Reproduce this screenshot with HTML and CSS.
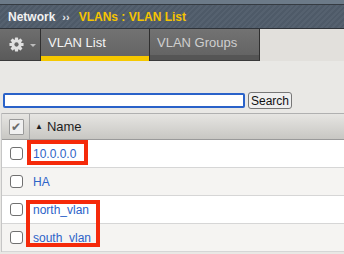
FILE: index.html
```html
<!DOCTYPE html>
<html lang="en">
<head>
  <meta charset="UTF-8">
  <title>VLAN List</title>
  <link rel="stylesheet" href="styles.css">
</head>
<body>
  <div class="topline"></div>
  <div class="crumbs">
    <span class="crumb">Network</span>
    <span class="sep">&rsaquo;&rsaquo;</span>
    <span class="here">VLANs : VLAN List</span>
  </div>

  <div class="tabs">
    <div class="menu">
      <svg width="15" height="15" viewBox="0 0 14 14">
        <g fill="#e0e0e0">
          <circle cx="7" cy="7" r="4.8"/>
          <rect x="5.5" y="0.4" width="3" height="13.2" rx="0.6"/>
          <rect x="5.5" y="0.4" width="3" height="13.2" rx="0.6" transform="rotate(45 7 7)"/>
          <rect x="5.5" y="0.4" width="3" height="13.2" rx="0.6" transform="rotate(90 7 7)"/>
          <rect x="5.5" y="0.4" width="3" height="13.2" rx="0.6" transform="rotate(135 7 7)"/>
        </g>
        <circle cx="7" cy="7" r="2" fill="#666"/>
      </svg>
      <span class="caret"></span>
    </div>
    <div class="tab active">VLAN List</div>
    <div class="tab">VLAN Groups</div>
  </div>

  <div class="search">
    <input class="search-box" type="text" value="">
    <button class="search-btn">Search</button>
  </div>

  <div class="list">
    <div class="row head">
      <div class="cell check"><span class="box checked">&#10004;</span></div>
      <div class="cell name"><span class="arrow">&#9650;</span> Name</div>
    </div>
    <div class="row">
      <div class="cell check"><span class="box"></span></div>
      <div class="cell name"><a href="#">10.0.0.0</a></div>
    </div>
    <div class="row alt">
      <div class="cell check"><span class="box"></span></div>
      <div class="cell name"><a href="#">HA</a></div>
    </div>
    <div class="row">
      <div class="cell check"><span class="box"></span></div>
      <div class="cell name"><a href="#">north_vlan</a></div>
    </div>
    <div class="row alt">
      <div class="cell check"><span class="box"></span></div>
      <div class="cell name"><a href="#">south_vlan</a></div>
    </div>

    <div class="mark mark-one"></div>
    <div class="mark mark-two"></div>
  </div>
</body>
</html>
```

FILE: styles.css
```css
body {
  margin: 0;
  background: #e9e8e5;
  font-family: "Liberation Sans", Arial, sans-serif;
  font-size: 12px;
  width: 344px;
  height: 254px;
  overflow: hidden;
}
.topline {
  height: 4px;
  background: #6c7a88;
}
.crumbs {
  height: 23px;
  border-top: 1px solid #353b42;
  border-bottom: 1px solid #2e3238;
  background: repeating-linear-gradient(135deg, #4e5a68 0, #4e5a68 2px, #55616f 2px, #55616f 4px);
  display: flex;
  align-items: center;
  padding-left: 8px;
  font-weight: bold;
}
.crumb {
  color: #f2f2f2;
}
.sep {
  color: #e8e8e8;
  margin: 0 9px 0 7px;
  font-size: 11px;
}
.here {
  color: #f5c400;
}
.tabs {
  display: flex;
  height: 32px;
  background: #e2e0dc;
}
.menu {
  box-sizing: border-box;
  width: 41px;
  border-right: 1px solid #2f2f2f;
  border-bottom: 1px solid #3a3a3a;
  background: linear-gradient(#6e6e6e, #5a5a5a);
  display: flex;
  align-items: center;
  padding-left: 9px;
}
.caret {
  width: 0;
  height: 0;
  border-left: 3px solid transparent;
  border-right: 3px solid transparent;
  border-top: 3px solid #bbb;
  margin-left: 6px;
  margin-top: 1px;
}
.tab {
  box-sizing: border-box;
  width: 110px;
  border-right: 1px solid #2f2f2f;
  border-bottom: 1px solid #3a3a3a;
  background: linear-gradient(#727272, #626262);
  color: #cfcfcf;
  font-size: 13px;
  padding: 6px 0 0 7px;
  box-shadow: inset 0 -5px 0 #555;
}
.tab.active {
  width: 109px;
  color: #f4f4f4;
  border-bottom: none;
  box-shadow: inset 0 -5px 0 #f5c800;
}
.search {
  display: flex;
  align-items: center;
  margin: 31px 0 0 3px;
  height: 17px;
}
.search-box {
  box-sizing: border-box;
  width: 242px;
  height: 15px;
  margin: 0;
  border: 2px solid #2a62c9;
  border-radius: 2px;
  background: #fff;
  padding: 0 2px;
}
.search-btn {
  box-sizing: border-box;
  height: 17px;
  margin: 0 0 0 3px;
  padding: 0 2px;
  font-family: "Liberation Sans", Arial, sans-serif;
  font-size: 12px;
  color: #111;
  background: #efefef;
  border: 1px solid #777;
  border-radius: 3px;
}
.list {
  position: relative;
  margin-top: 4px;
  margin-left: 1px;
  border-left: 1px solid #c6c6c6;
}
.row {
  display: flex;
  height: 27px;
  border-bottom: 1px solid #d6d6d6;
  background: #fff;
}
.row.alt {
  background: #f5f4f2;
}
.row.head {
  height: 25px;
  border-top: 1px solid #b0b0b0;
  border-bottom: 1px solid #9a9a9a;
  background: linear-gradient(#e6e5e2, #c8c7c3);
}
.cell {
  display: flex;
  align-items: center;
}
.check {
  width: 27px;
  justify-content: center;
}
.head .check {
  border-right: 1px solid #a8a8a8;
}
.box {
  box-sizing: border-box;
  width: 13px;
  height: 13px;
  border: 1px solid #707070;
  border-radius: 3px;
  background: #fff;
  margin-left: 1px;
}
.box.checked {
  width: 15px;
  height: 16px;
  border-radius: 1px;
  border-color: #9a9a9a;
  background: #f0f0f0;
  color: #6a6a6a;
  font-size: 12px;
  line-height: 14px;
  text-align: center;
}
.name {
  padding-left: 4px;
  color: #1e1e1e;
}
.head .name {
  font-size: 13px;
  padding-left: 5px;
}
.arrow {
  font-size: 8px;
  margin-right: 4px;
}
.name a {
  color: #2d63c8;
  text-decoration: none;
}
.mark {
  position: absolute;
  border: 4px solid #f52a0a;
}
.mark-one {
  left: 25px;
  top: 27px;
  width: 53px;
  height: 17px;
}
.mark-two {
  left: 24px;
  top: 87px;
  width: 66px;
  height: 39px;
}
```
